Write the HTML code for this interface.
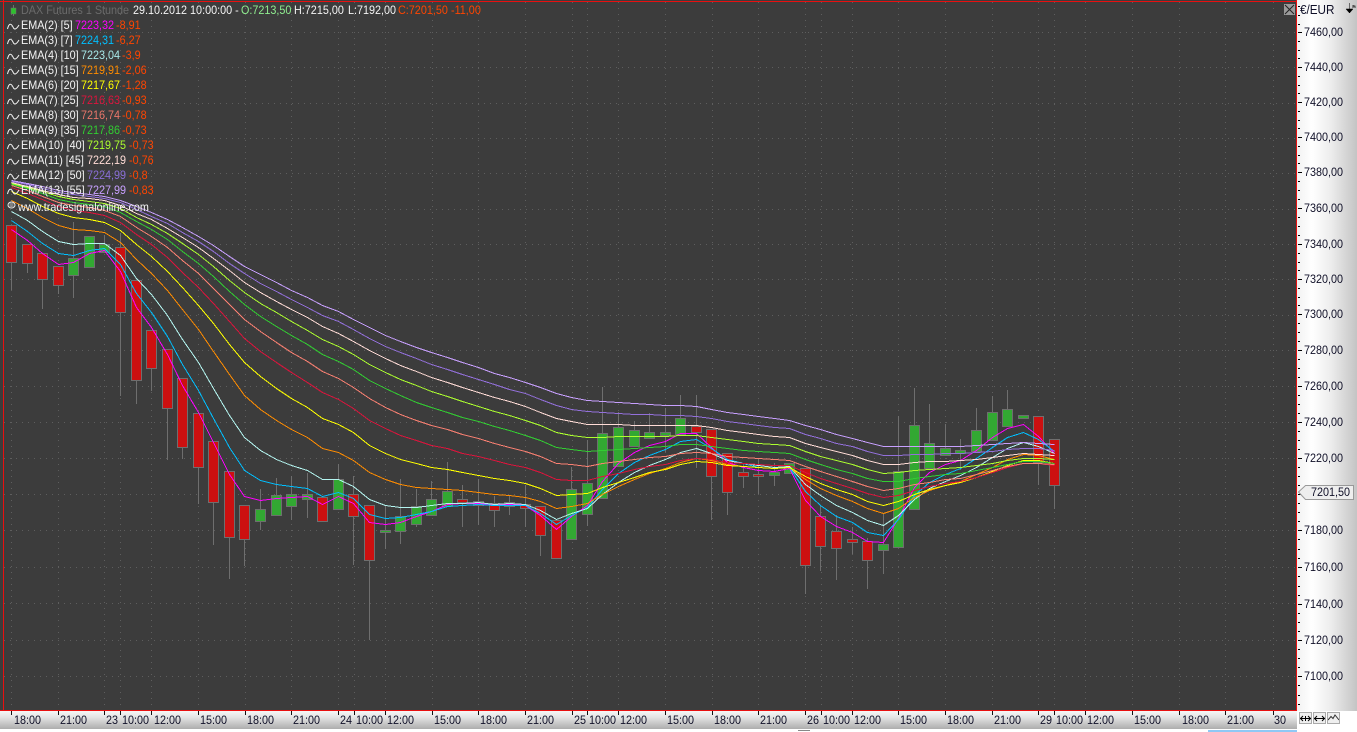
<!DOCTYPE html>
<html>
<head>
<meta charset="utf-8">
<title>DAX Futures 1 Stunde</title>
<style>
html,body{margin:0;padding:0;width:1357px;height:732px;overflow:hidden;background:#fff;font-family:"Liberation Sans",sans-serif;font-size:12px}
#chart{position:absolute;left:0;top:0;width:1297px;height:711px;background:#3c3c3c}
svg{position:absolute;left:0;top:0}
.t{position:absolute;white-space:nowrap;line-height:14px;height:14px;transform:scaleX(.9);transform-origin:0 50%}
.l{color:#f4f4f4}
.d{color:#ff4500}
#price{position:absolute;left:1297px;top:0;width:60px;height:711px;background:linear-gradient(to right,#f2f2f2,#fff 25%,#eee 55%,#c4c4c4)}
#time{position:absolute;left:0;top:711px;width:1297px;height:18px;background:linear-gradient(to bottom,#f6f6f6,#e4e4e4 35%,#adadad)}
.p{color:#101028}
#btns{position:absolute;left:1297px;top:711px;width:60px;height:21px;background:#fff}
.b{position:absolute;top:1px;width:11px;height:10px;border:1px solid #aaa;background:#efefef;overflow:hidden}
#blue{position:absolute;left:1208px;top:730px;width:89px;height:2px;background:#8fc8f5}
#mark{position:absolute;left:798px;top:730px;width:12px;height:1px;background:#888}
#tag{position:absolute;left:1298px;top:485px}
#x{position:absolute;left:1284px;top:4px;width:11px;height:11px;background:#9a9a9a}
</style>
</head>
<body>
<div id="chart"></div>
<svg id="s" width="1357" height="732" viewBox="0 0 1357 732"></svg>

<div id="price"></div>
<div id="time"></div>
<div id="btns">
<div class="b" style="left:2px"><svg width="11" height="10"><path d="M0 5.5H11M3 3L.5 5.5 3 8M8 3l2.500 2.500L8 8M5.500 3V8" fill="none" stroke="#000"/></svg></div>
<div class="b" style="left:16px"><svg width="11" height="10"><path d="M0 5.500H11M3 3L.5 5.500 3 8M8 3l2.500 2.500L8 8" fill="none" stroke="#000"/></svg></div>
<div class="b" style="left:30px"><svg width="11" height="10"><path d="M0 7L3 3.500 5 5.500 7 2l4 5" fill="none" stroke="#333"/></svg></div>
</div>
<div id="blue"></div>
<div id="mark"></div>
<svg style="left:1297px;top:0" width="60" height="711"><g id="pt"></g></svg>
<svg style="left:0;top:711px" width="1297" height="18"><g id="tt"></g></svg>

<div id="x"><svg width="11" height="11"><path d="M1 1L10 10M10 1L1 10" stroke="#222" fill="none"/></svg></div>
<svg style="left:1345px;top:3px" width="11" height="11"><path d="M4.500 0V6M1 6H8L4.500 10Z" fill="#000" stroke="#000" stroke-width=".5"/><path d="M8 2V5M8 3H10V5" fill="none" stroke="#000" stroke-width=".7"/></svg>

<div class="t" style="left:21px;top:3px;color:#6b6b6b">DAX Futures 1 Stunde</div>
<div class="t l" style="left:133px;top:3px">29.10.2012 10:00:00 -</div>
<div class="t" style="left:241px;top:3px;color:#90ee90">O:7213,50</div>
<div class="t l" style="left:294px;top:3px">H:7215,00</div>
<div class="t l" style="left:348px;top:3px">L:7192,00</div>
<div class="t" style="left:398px;top:3px;color:#ff4500">C:7201,50</div>
<div class="t d" style="left:451px;top:3px">-11,00</div>

<div class="t l" style="left:21px;top:18px">EMA(2) [5]</div><div class="t" style="left:75px;top:18px;color:#f0f">7223,32</div><div class="t d" style="left:116px;top:18px">-8,91</div>
<div class="t l" style="left:21px;top:33px">EMA(3) [7]</div><div class="t" style="left:75px;top:33px;color:#00bfff">7224,31</div><div class="t d" style="left:116px;top:33px">-6,27</div>
<div class="t l" style="left:21px;top:48px">EMA(4) [10]</div><div class="t" style="left:81px;top:48px;color:#a8e8e8">7223,04</div><div class="t d" style="left:122px;top:48px">-3,9</div>
<div class="t l" style="left:21px;top:63px">EMA(5) [15]</div><div class="t" style="left:81px;top:63px;color:#ff8c00">7219,91</div><div class="t d" style="left:122px;top:63px">-2,06</div>
<div class="t l" style="left:21px;top:78px">EMA(6) [20]</div><div class="t" style="left:81px;top:78px;color:#ff0">7217,67</div><div class="t d" style="left:122px;top:78px">-1,28</div>
<div class="t l" style="left:21px;top:93px">EMA(7) [25]</div><div class="t" style="left:81px;top:93px;color:#dc143c">7216,63</div><div class="t d" style="left:122px;top:93px">-0,93</div>
<div class="t l" style="left:21px;top:108px">EMA(8) [30]</div><div class="t" style="left:81px;top:108px;color:#e9766a">7216,74</div><div class="t d" style="left:122px;top:108px">-0,78</div>
<div class="t l" style="left:21px;top:123px">EMA(9) [35]</div><div class="t" style="left:81px;top:123px;color:#32cd32">7217,86</div><div class="t d" style="left:122px;top:123px">-0,73</div>
<div class="t l" style="left:21px;top:138px">EMA(10) [40]</div><div class="t" style="left:87px;top:138px;color:#adff2f">7219,75</div><div class="t d" style="left:129px;top:138px">-0,73</div>
<div class="t l" style="left:21px;top:153px">EMA(11) [45]</div><div class="t" style="left:87px;top:153px;color:#ffdcd6">7222,19</div><div class="t d" style="left:129px;top:153px">-0,76</div>
<div class="t l" style="left:21px;top:168px">EMA(12) [50]</div><div class="t" style="left:87px;top:168px;color:#8a6fd8">7224,99</div><div class="t d" style="left:129px;top:168px">-0,8</div>
<div class="t l" style="left:21px;top:183px">EMA(13) [55]</div><div class="t" style="left:87px;top:183px;color:#c8a0ff">7227,99</div><div class="t d" style="left:129px;top:183px">-0,83</div>
<div class="t l" style="left:18px;top:200px">www.tradesignalonline.com</div>

<svg id="tag" width="58" height="15"><path d="M.5 7L7.500 .5H55.500V14.500H7.500Z" fill="#eee" stroke="#999"/></svg>
<div class="t p" style="left:1311px;top:485px">7201,50</div>

<div class="t" style="left:1300px;top:3px;color:#101028;font-size:13px">€/EUR</div>
<div class="t p" style="left:1304px;top:25px">7460,00</div>
<div class="t p" style="left:1304px;top:60px">7440,00</div>
<div class="t p" style="left:1304px;top:95px">7420,00</div>
<div class="t p" style="left:1304px;top:130px">7400,00</div>
<div class="t p" style="left:1304px;top:165px">7380,00</div>
<div class="t p" style="left:1304px;top:201px">7360,00</div>
<div class="t p" style="left:1304px;top:237px">7340,00</div>
<div class="t p" style="left:1304px;top:272px">7320,00</div>
<div class="t p" style="left:1304px;top:307px">7300,00</div>
<div class="t p" style="left:1304px;top:343px">7280,00</div>
<div class="t p" style="left:1304px;top:379px">7260,00</div>
<div class="t p" style="left:1304px;top:415px">7240,00</div>
<div class="t p" style="left:1304px;top:451px">7220,00</div>
<div class="t p" style="left:1304px;top:523px">7180,00</div>
<div class="t p" style="left:1304px;top:560px">7160,00</div>
<div class="t p" style="left:1304px;top:597px">7140,00</div>
<div class="t p" style="left:1304px;top:633px">7120,00</div>
<div class="t p" style="left:1304px;top:669px">7100,00</div>

<div class="t p" style="left:14px;top:713px">18:00</div>
<div class="t p" style="left:60px;top:713px">21:00</div>
<div class="t p" style="left:106px;top:713px">23</div>
<div class="t p" style="left:122px;top:713px">10:00</div>
<div class="t p" style="left:154px;top:713px">12:00</div>
<div class="t p" style="left:200px;top:713px">15:00</div>
<div class="t p" style="left:247px;top:713px">18:00</div>
<div class="t p" style="left:293px;top:713px">21:00</div>
<div class="t p" style="left:340px;top:713px">24</div>
<div class="t p" style="left:356px;top:713px">10:00</div>
<div class="t p" style="left:387px;top:713px">12:00</div>
<div class="t p" style="left:434px;top:713px">15:00</div>
<div class="t p" style="left:480px;top:713px">18:00</div>
<div class="t p" style="left:527px;top:713px">21:00</div>
<div class="t p" style="left:574px;top:713px">25</div>
<div class="t p" style="left:589px;top:713px">10:00</div>
<div class="t p" style="left:620px;top:713px">12:00</div>
<div class="t p" style="left:667px;top:713px">15:00</div>
<div class="t p" style="left:714px;top:713px">18:00</div>
<div class="t p" style="left:760px;top:713px">21:00</div>
<div class="t p" style="left:807px;top:713px">26</div>
<div class="t p" style="left:823px;top:713px">10:00</div>
<div class="t p" style="left:854px;top:713px">12:00</div>
<div class="t p" style="left:900px;top:713px">15:00</div>
<div class="t p" style="left:947px;top:713px">18:00</div>
<div class="t p" style="left:994px;top:713px">21:00</div>
<div class="t p" style="left:1040px;top:713px">29</div>
<div class="t p" style="left:1056px;top:713px">10:00</div>
<div class="t p" style="left:1087px;top:713px">12:00</div>
<div class="t p" style="left:1134px;top:713px">15:00</div>
<div class="t p" style="left:1182px;top:713px">18:00</div>
<div class="t p" style="left:1227px;top:713px">21:00</div>
<div class="t p" style="left:1274px;top:713px">30</div>

<script>
var R='#cc1010',G='#32a832';
var c=[
[225,225,262,290,R],[244,244,263,273,R],[253,253,279,309,R],[266,266,285,294,R],[222,258,275,298,G],
[236,236,267,267,G],[235,244,252,252,G],[233,247,312,396,R],[280,280,380,404,R],[330,330,368,391,R],
[349,349,408,460,R],[378,378,447,459,R],[413,413,467,504,R],[441,441,502,545,R],[471,471,537,579,R],
[505,505,539,566,R],[489,509,521,530,G],[478,495,515,515,G],[476,494,506,520,G],[473,494,499,518,G],
[497,497,521,521,R],[464,479,509,509,G],[476,494,516,565,R],[505,505,560,640,R],[506,530,532,549,G],
[479,516,531,544,G],[489,506,524,527,G],[481,499,515,515,G],[462,491,506,506,G],[485,499,502,527,R],
[479,501,505,525,G],[496,503,510,527,R],[496,502,506,515,G],[485,504,508,527,R],[506,506,535,556,R],
[520,520,558,558,R],[467,489,539,539,G],[440,483,514,526,G],[387,433,498,498,G],[412,427,466,466,G],
[421,430,446,446,G],[413,432,438,438,G],[408,432,435,452,G],[395,418,434,434,G],[395,426,432,468,R],
[429,429,476,520,R],[453,453,492,515,R],[463,472,476,488,R],[458,474,476,494,R],[463,472,475,486,G],
[463,463,473,473,G],[468,468,565,594,R],[506,516,546,571,R],[515,531,548,580,R],[527,539,542,554,R],
[538,541,560,589,R],[514,544,550,574,G],[416,471,547,548,G],[388,425,509,509,G],[404,443,468,468,G],
[424,448,455,455,G],[439,450,453,470,G],[408,430,451,451,G],[396,412,440,440,G],[390,409,426,426,G],
[415,415,418,418,G],[416,416,462,485,R],[439,439,485,509,R]];
function X(i){return Math.floor(11.5+15.565*i)}
var h='';
var ys=[32,67,103,138,173,209,244,279,315,350,386,422,458,494,530,567,603,640,676];
var tk=[11,58,104,120,151,198,245,291,338,354,385,432,478,525,572,587,618,665,712,758,805,821,852,898,945,992,1038,1054,1085,1132,1179,1225,1273];
var gd='';
ys.forEach(function(y){gd+='M4 '+(y+.5)+'H1296'});
var gv='';
tk.forEach(function(x){gv+='M'+(x+.5)+' 2V710'});
h+='<path d="'+gd+'" stroke="#5e5e5e" stroke-dasharray="1 5" fill="none"/>';
h+='<path d="'+gv+'" stroke="#5e5e5e" stroke-dasharray="1 5" fill="none"/>';
c.forEach(function(d,i){var x=X(i);
h+='<path d="M'+(x+.5)+' '+d[0]+'V'+d[3]+'" stroke="#6e6e6e" fill="none"/>';
h+='<rect x="'+(x-4.5)+'" y="'+(d[1]+.5)+'" width="10" height="'+Math.max(d[2]-d[1],2)+'" fill="'+d[4]+'" stroke="#6e6e6e"/>';
});
var P=[[5,229,'#ff00ff'],[7,220,'#00bfff'],[10,211,'#b4f5f0'],[15,200,'#ff8c00'],[20,191,'#ffff00'],[25,187,'#dc143c'],[30,185,'#fa8072'],[35,184,'#32cd32'],[40,183,'#adff2f'],[45,182,'#ffdcd6'],[50,181,'#9370db'],[55,180,'#c8a0ff']];
P.forEach(function(p){var a=2/(p[0]+1),v=p[1],pts=[];
c.forEach(function(d,i){var cl=d[4]==G?d[1]:d[2];if(i>0)v=v+(cl-v)*a;pts.push((X(i)+.5)+','+(Math.round(v)+.5))});
h+='<polyline points="'+pts.join(' ')+'" fill="none" stroke="'+p[2]+'" stroke-width="1" shape-rendering="crispEdges"/>';
});
h+='<path d="M0 1.500H1297M3.500 0V711M1296.500 0V711M0 710.500H1297" stroke="#e81010" fill="none"/>';
h+='<path d="M13.500 5V16" stroke="#6e6e6e"/><rect x="11" y="8" width="5" height="6" fill="#2ec02e" stroke="#6e6e6e" stroke-width=".5"/>';
for(var r=0;r<12;r++){var y=25+15*r;h+='<path d="M7.500 '+(y+4)+'C9 '+(y-2)+' 11 '+(y-2)+' 13 '+(y+2)+'C14 '+(y+5)+' 16 '+(y+5)+' 19 '+y+'" fill="none" stroke="#f4f4f4"/>';}
h+='<ellipse cx="11.500" cy="205" rx="3.500" ry="3" fill="none" stroke="#eee"/><path d="M9.500 204H13.500M9.500 206H13.500" stroke="#eee" stroke-width=".7"/>';
document.getElementById('s').innerHTML=h;
var lab=[32,67,102,137,172,208,244,279,314,350,386,422,458,494,530,567,604,640,676];
var pt='';
function tick(y,m){y=Math.round(y);pt+='M1 '+(y+.5)+'H'+(m?5:3)}
tick(6,0);tick(15,0);tick(24,0);
lab.forEach(function(y,i){tick(y,1);if(i<18){var n=lab[i+1];for(var k=1;k<4;k++)tick(y+(n-y)*k/4,0)}});
tick(685,0);tick(695,0);tick(704,0);
document.getElementById('pt').innerHTML='<path d="'+pt+'" stroke="#000" fill="none"/>';
var t='';tk.forEach(function(x){t+='M'+(x+.5)+' 0V4'});
document.getElementById('tt').innerHTML='<path d="'+t+'" stroke="#111" fill="none"/>';
</script>
</body>
</html>
